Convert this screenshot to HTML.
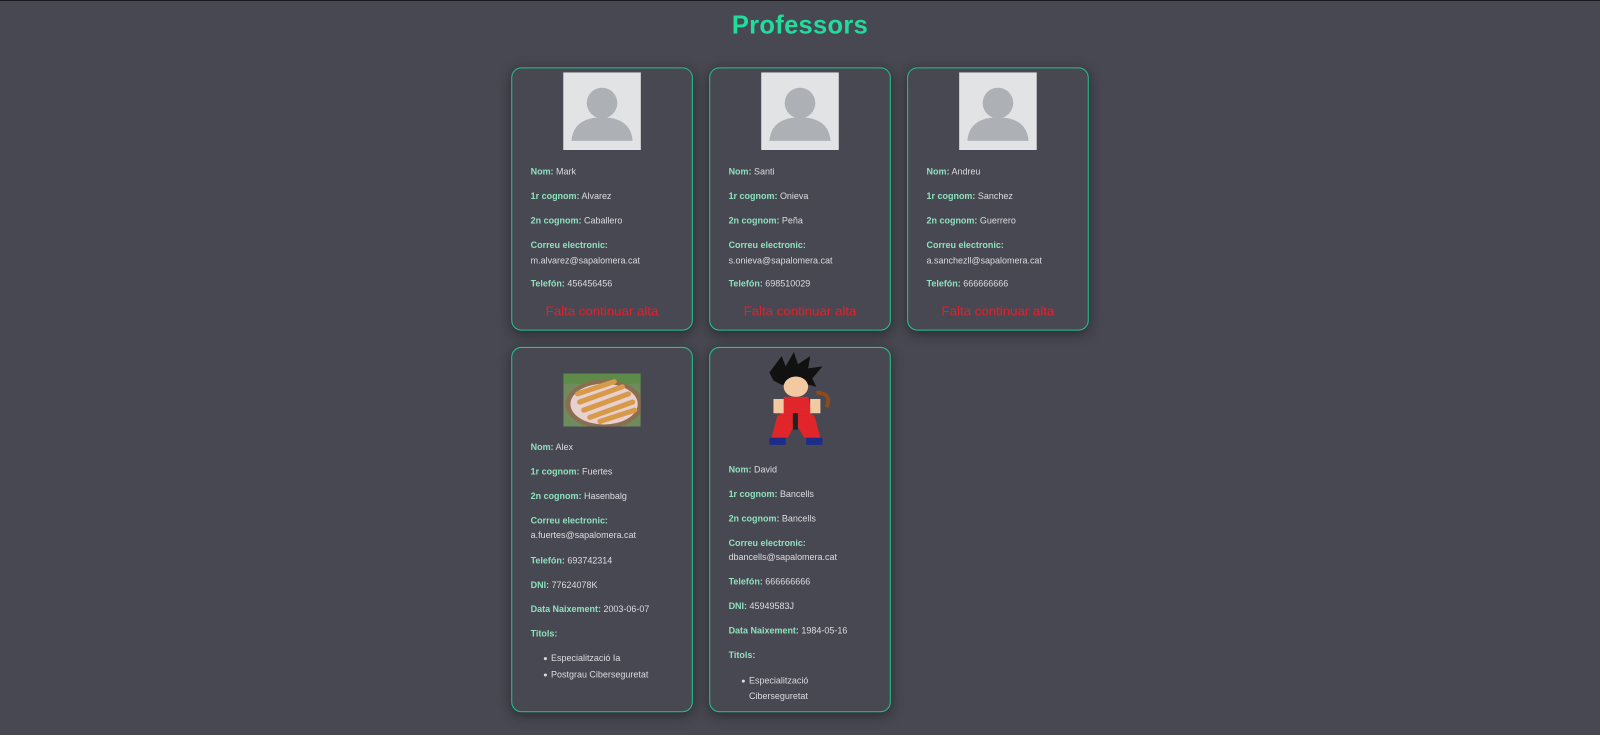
<!DOCTYPE html>
<html><head><meta charset="utf-8"><style>
*{margin:0;padding:0;box-sizing:border-box}
body{width:1600px;height:734px;background:#484852;font-family:"Liberation Sans",sans-serif;position:relative;overflow:hidden;color:#d8d8dc;border-top:1px solid #1a1a1e}
#w{position:absolute;left:0;top:-1px;width:1568px;height:720px;transform:scale(1.0204);transform-origin:0 0}
h1{position:absolute;top:11px;left:0;width:1568px;text-align:center;color:#22dc9c;font-size:25px;font-weight:bold;letter-spacing:0.3px}
.c{position:absolute;width:178px;border:1px solid #25c38f;border-radius:10px;box-shadow:0 3px 12px rgba(20,20,25,.55);background:#484852}
.l{position:absolute;left:18px;font-size:8.8px;line-height:12px;white-space:nowrap;color:#dcdce0}
.l b{color:#8fe0bd;font-weight:bold}
.f{position:absolute;left:0;width:176px;text-align:center;color:#e81e2a;font-size:13px;line-height:14px}
.av{position:absolute;left:50px;top:4px;width:76px;height:76px;background:#e2e3e5;overflow:hidden}
.dot{position:absolute;left:31px;width:3px;height:3px;border-radius:50%;background:#dcdce0}
</style></head><body><div id="w">
<h1>Professors</h1>

<div class="c" style="left:501px;top:66px;height:258px">
<div class="av"><svg width="76" height="76"><circle cx="38" cy="30" r="15" fill="#adb1b5"/><path d="M8 67 Q10 44 38 44 Q66 44 68 67 Z" fill="#adb1b5"/></svg></div>
<div class="l" style="top:95px"><b>Nom:</b> Mark</div>
<div class="l" style="top:119px"><b>1r cognom:</b> Alvarez</div>
<div class="l" style="top:143px"><b>2n cognom:</b> Caballero</div>
<div class="l" style="top:167px"><b>Correu electronic:</b></div>
<div class="l" style="top:182px">m.alvarez@sapalomera.cat</div>
<div class="l" style="top:205px"><b>Telefón:</b> 456456456</div>
<div class="f" style="top:231px">Falta continuar alta</div>
</div>

<div class="c" style="left:695px;top:66px;height:258px">
<div class="av"><svg width="76" height="76"><circle cx="38" cy="30" r="15" fill="#adb1b5"/><path d="M8 67 Q10 44 38 44 Q66 44 68 67 Z" fill="#adb1b5"/></svg></div>
<div class="l" style="top:95px"><b>Nom:</b> Santi</div>
<div class="l" style="top:119px"><b>1r cognom:</b> Onieva</div>
<div class="l" style="top:143px"><b>2n cognom:</b> Peña</div>
<div class="l" style="top:167px"><b>Correu electronic:</b></div>
<div class="l" style="top:182px">s.onieva@sapalomera.cat</div>
<div class="l" style="top:205px"><b>Telefón:</b> 698510029</div>
<div class="f" style="top:231px">Falta continuar alta</div>
</div>

<div class="c" style="left:889px;top:66px;height:258px">
<div class="av"><svg width="76" height="76"><circle cx="38" cy="30" r="15" fill="#adb1b5"/><path d="M8 67 Q10 44 38 44 Q66 44 68 67 Z" fill="#adb1b5"/></svg></div>
<div class="l" style="top:95px"><b>Nom:</b> Andreu</div>
<div class="l" style="top:119px"><b>1r cognom:</b> Sanchez</div>
<div class="l" style="top:143px"><b>2n cognom:</b> Guerrero</div>
<div class="l" style="top:167px"><b>Correu electronic:</b></div>
<div class="l" style="top:182px">a.sanchezll@sapalomera.cat</div>
<div class="l" style="top:205px"><b>Telefón:</b> 666666666</div>
<div class="f" style="top:231px">Falta continuar alta</div>
</div>

<div class="c" style="left:501px;top:340px;height:358px">
<div style="position:absolute;left:50px;top:25px;width:76px;height:52px;overflow:hidden">
<svg width="76" height="52"><rect width="76" height="52" fill="#6f8a5c"/><rect x="0" y="0" width="76" height="10" fill="#5e8a4a"/><ellipse cx="40" cy="30" rx="38" ry="24" fill="#8a6e50"/><ellipse cx="40" cy="30" rx="33" ry="20" fill="#e8cfd0"/>
<g stroke="#d69a48" stroke-width="5" stroke-linecap="round"><line x1="14" y1="20" x2="50" y2="8"/><line x1="16" y1="28" x2="58" y2="13"/><line x1="20" y1="36" x2="64" y2="20"/><line x1="26" y1="43" x2="68" y2="28"/><line x1="36" y1="47" x2="70" y2="36"/></g></svg></div>
<div class="l" style="top:91px"><b>Nom:</b> Alex</div>
<div class="l" style="top:115px"><b>1r cognom:</b> Fuertes</div>
<div class="l" style="top:139px"><b>2n cognom:</b> Hasenbalg</div>
<div class="l" style="top:163px"><b>Correu electronic:</b></div>
<div class="l" style="top:177px">a.fuertes@sapalomera.cat</div>
<div class="l" style="top:202px"><b>Telefón:</b> 693742314</div>
<div class="l" style="top:226px"><b>DNI:</b> 77624078K</div>
<div class="l" style="top:250px"><b>Data Naixement:</b> 2003-06-07</div>
<div class="l" style="top:274px"><b>Titols:</b></div>
<div class="dot" style="top:303px"></div><div class="l" style="left:38px;top:298px">Especialització Ia</div>
<div class="dot" style="top:319px"></div><div class="l" style="left:38px;top:314px">Postgrau Ciberseguretat</div>
</div>

<div class="c" style="left:695px;top:340px;height:358px">
<svg style="position:absolute;left:48px;top:4px" width="74" height="96">
<path d="M10 20 L22 4 L26 14 L34 0 L38 12 L50 4 L48 16 L62 14 L52 26 L56 34 L40 30 L22 32 L14 28 Z" fill="#111"/>
<ellipse cx="36" cy="34" rx="12" ry="10" fill="#f2c9a0"/>
<path d="M24 44 L48 44 L52 62 L20 62 Z" fill="#e0262a"/>
<path d="M56 40 Q72 40 66 54" stroke="#8a4a22" stroke-width="4" fill="none"/>
<rect x="14" y="46" width="10" height="14" fill="#f2c9a0"/><rect x="50" y="46" width="10" height="14" fill="#f2c9a0"/>
<path d="M18 62 L54 62 L60 84 L44 84 L36 70 L28 84 L12 84 Z" fill="#e0262a"/>
<rect x="33" y="60" width="5" height="16" fill="#222"/>
<rect x="10" y="84" width="16" height="7" fill="#1d2d8a"/><rect x="46" y="84" width="16" height="7" fill="#1d2d8a"/>
</svg>
<div class="l" style="top:113px"><b>Nom:</b> David</div>
<div class="l" style="top:137px"><b>1r cognom:</b> Bancells</div>
<div class="l" style="top:161px"><b>2n cognom:</b> Bancells</div>
<div class="l" style="top:185px"><b>Correu electronic:</b></div>
<div class="l" style="top:199px">dbancells@sapalomera.cat</div>
<div class="l" style="top:223px"><b>Telefón:</b> 666666666</div>
<div class="l" style="top:247px"><b>DNI:</b> 45949583J</div>
<div class="l" style="top:271px"><b>Data Naixement:</b> 1984-05-16</div>
<div class="l" style="top:295px"><b>Titols:</b></div>
<div class="dot" style="top:325px"></div><div class="l" style="left:38px;top:320px">Especialització</div>
<div class="l" style="left:38px;top:335px">Ciberseguretat</div>
</div>
</div></body></html>
